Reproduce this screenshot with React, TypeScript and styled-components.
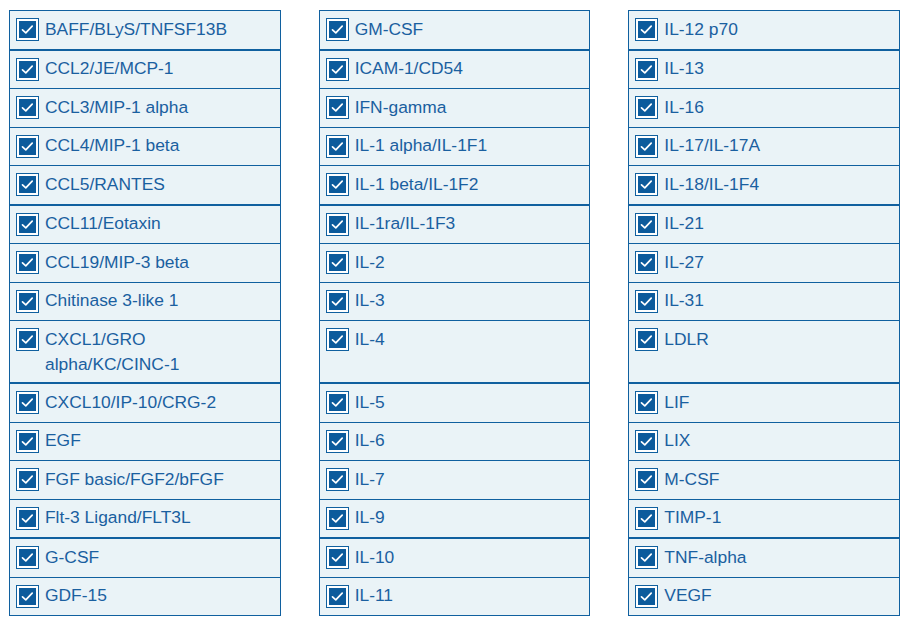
import React from "react";
import styled, { createGlobalStyle } from "styled-components";

const GlobalStyle = createGlobalStyle`
  html, body {
    margin: 0;
    padding: 0;
    background: #ffffff;
  }
  body {
    font-family: "Liberation Sans", Arial, sans-serif;
  }
`;

const Page = styled.div`
  padding: 10px 0 0 9px;
`;

const Grid = styled.div`
  display: grid;
  width: 891px;
  grid-template-columns: repeat(3, 1fr);
  column-gap: 38px;
`;

const Cell = styled.label<{ $first: boolean; $sep: boolean }>`
  display: flex;
  align-items: flex-start;
  gap: 6px;
  min-height: 26.5px;
  padding: 5.5px 6px;
  background: #eaf3f7;
  border-left: 1px solid #10609f;
  border-right: 1px solid #10609f;
  border-top: ${(p) => (p.$first ? "1px solid #10609f" : "none")};
  border-bottom: ${(p) => (p.$sep ? "2px" : "1px")} solid #10609f;
  cursor: pointer;
`;

const Box = styled.span`
  flex: 0 0 auto;
  box-sizing: border-box;
  width: 23px;
  height: 23px;
  margin-top: 1.5px;
  border: 1px solid #10609f;
  background: #ffffff;
  padding: 2px;
  display: flex;
`;

const Fill = styled.span`
  width: 17px;
  height: 17px;
  background: #0c5b9c;
  display: flex;
  align-items: center;
  justify-content: center;
`;

const Text = styled.span`
  font-size: 17.4px;
  line-height: 25px;
  color: #1a60a0;
`;

const col1 = [
  "BAFF/BLyS/TNFSF13B",
  "CCL2/JE/MCP-1",
  "CCL3/MIP-1 alpha",
  "CCL4/MIP-1 beta",
  "CCL5/RANTES",
  "CCL11/Eotaxin",
  "CCL19/MIP-3 beta",
  "Chitinase 3-like 1",
  "CXCL1/GRO alpha/KC/CINC-1",
  "CXCL10/IP-10/CRG-2",
  "EGF",
  "FGF basic/FGF2/bFGF",
  "Flt-3 Ligand/FLT3L",
  "G-CSF",
  "GDF-15",
];

const col2 = [
  "GM-CSF",
  "ICAM-1/CD54",
  "IFN-gamma",
  "IL-1 alpha/IL-1F1",
  "IL-1 beta/IL-1F2",
  "IL-1ra/IL-1F3",
  "IL-2",
  "IL-3",
  "IL-4",
  "IL-5",
  "IL-6",
  "IL-7",
  "IL-9",
  "IL-10",
  "IL-11",
];

const col3 = [
  "IL-12 p70",
  "IL-13",
  "IL-16",
  "IL-17/IL-17A",
  "IL-18/IL-1F4",
  "IL-21",
  "IL-27",
  "IL-31",
  "LDLR",
  "LIF",
  "LIX",
  "M-CSF",
  "TIMP-1",
  "TNF-alpha",
  "VEGF",
];

const separators = new Set([0, 4, 8, 12]);

const Check = () => (
  <Box>
    <Fill>
      <svg width="17" height="17" viewBox="0 0 17 17">
        <polyline
          points="3.5,8.8 6.8,11.8 13.2,5.2"
          fill="none"
          stroke="#ffffff"
          strokeWidth="1.7"
          strokeLinecap="round"
          strokeLinejoin="round"
        />
      </svg>
    </Fill>
  </Box>
);

export default function App() {
  const rows = col1.map((_, i) => [col1[i], col2[i], col3[i]]);
  return (
    <>
      <GlobalStyle />
      <Page>
        <Grid>
          {rows.map((row, i) =>
            row.map((label) => (
              <Cell key={label} $first={i === 0} $sep={separators.has(i)}>
                <Check />
                <Text>{label}</Text>
              </Cell>
            ))
          )}
        </Grid>
      </Page>
    </>
  );
}
